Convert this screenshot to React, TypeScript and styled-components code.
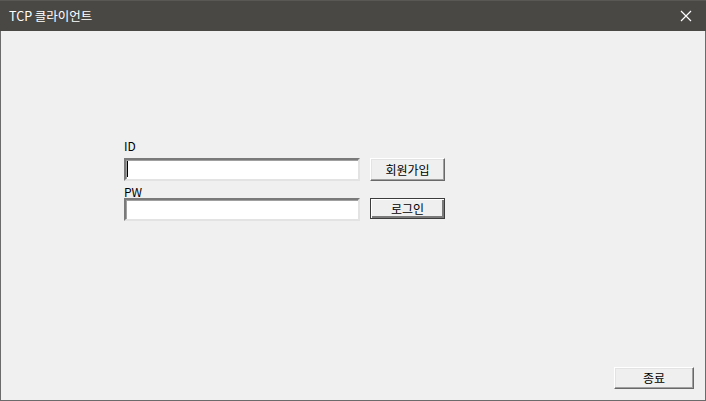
import React from "react";
import styled, { createGlobalStyle, css } from "styled-components";

const Global = createGlobalStyle`
  html, body { margin: 0; padding: 0; background: #f0f0f0; }
  body { font-family: "Noto Sans CJK KR", "Noto Sans", "Liberation Sans", sans-serif; }
  * { box-sizing: border-box; }
`;

const Window = styled.div`
  width: 706px;
  height: 401px;
  display: flex;
  flex-direction: column;
  background: #f0f0f0;
  overflow: hidden;
`;

const TitleBar = styled.div`
  height: 31px;
  flex: none;
  background: #4a4845;
  border-top: 1px solid #5a5855;
  display: flex;
  align-items: center;
  justify-content: space-between;
  padding-left: 9px;
  padding-right: 14px;
`;

const Title = styled.span`
  color: #ffffff;
  font-size: 12.5px;
  line-height: 14px;
  margin-top: -1px;
`;

const CloseIcon = styled.svg`
  width: 12px;
  height: 12px;
  display: block;
`;

const Body = styled.div`
  flex: 1;
  display: flex;
  flex-direction: column;
  border: 1px solid #6b6b6b;
  border-top: none;
  padding: 109px 11px 11px 123px;
`;

const Form = styled.div`
  display: grid;
  grid-template-columns: 236px 75px;
  column-gap: 10px;
  align-items: start;
`;

const Label = styled.div<{ $gap: number }>`
  grid-column: 1 / span 2;
  font-size: 12px;
  line-height: 12px;
  height: 12px;
  color: #000;
  margin-bottom: ${(p) => p.$gap}px;
`;

const Input = styled.div`
  height: 23px;
  background: #ffffff;
  border-style: solid;
  border-width: 2px;
  border-color: #7a7a7a #e3e3e3 #e3e3e3 #7a7a7a;
  box-shadow: inset 1px 1px 0 #a0a0a0;
  position: relative;
`;

const Caret = styled.div`
  position: absolute;
  left: 1px;
  top: 1px;
  width: 1px;
  height: 16px;
  background: #000;
`;

const Button = styled.button<{ $default?: boolean }>`
  height: 23px;
  width: 75px;
  padding: 0;
  margin: 0;
  font-family: inherit;
  font-size: 12px;
  line-height: 12px;
  color: #000;
  background: #efefef;
  border-style: solid;
  border-width: 1px;
  border-color: #ffffff #696969 #696969 #ffffff;
  box-shadow: inset -1px -1px 0 #a0a0a0, inset 1px 1px 0 #e3e3e3;
  ${(p) =>
    p.$default &&
    css`
      height: 21px;
      border: 1px solid #3c3c3c;
      box-shadow: inset 1px 1px 0 #ffffff, inset -2px -2px 0 #7a7a7a;
    `}
`;

const Spacer = styled.div`
  height: 5px;
  grid-column: 1 / span 2;
`;

const Footer = styled.div`
  margin-top: auto;
  display: flex;
  justify-content: flex-end;
`;

const ExitButton = styled(Button)`
  width: 80px;
  height: 22px;
`;

export default function App() {
  return (
    <>
      <Global />
      <Window>
        <TitleBar>
          <Title>TCP 클라이언트</Title>
          <CloseIcon viewBox="0 0 12 12">
            <path d="M1 1 L11 11 M11 1 L1 11" stroke="#ffffff" strokeWidth="1.2" fill="none" />
          </CloseIcon>
        </TitleBar>
        <Body>
          <Form>
            <Label $gap={6}>ID</Label>
            <Input>
              <Caret />
            </Input>
            <Button>회원가입</Button>
            <Spacer />
            <Label $gap={0}>PW</Label>
            <Input />
            <Button $default>로그인</Button>
          </Form>
          <Footer>
            <ExitButton>종료</ExitButton>
          </Footer>
        </Body>
      </Window>
    </>
  );
}
